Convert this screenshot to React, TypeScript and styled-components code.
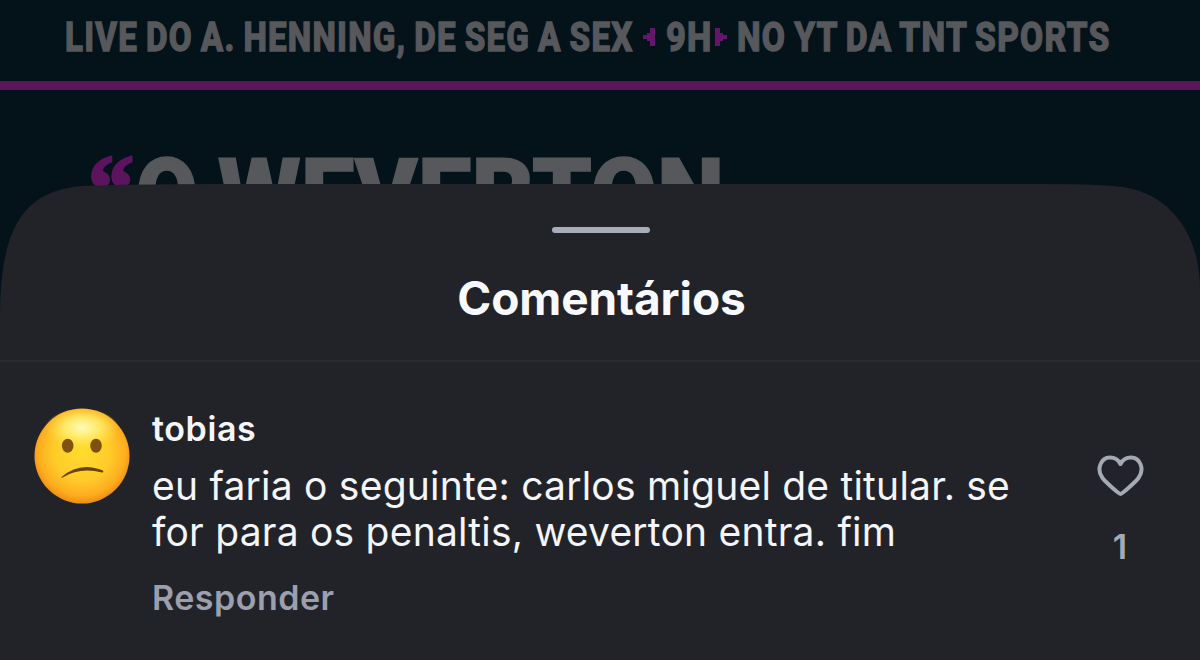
import type { ReactNode } from 'react';
import styled, { createGlobalStyle } from 'styled-components';

export default function App() {
  return (
    <Screen>
      <GlobalStyle />
      <Post>
        <Ticker>
          <Fitted width={567.5} scale={0.81}>
            LIVE DO A. HENNING, DE SEG A SEX
          </Fitted>
          <Arrow />
          <Fitted width={38.5} scale={0.84}>
            9H
          </Fitted>
          <Arrow flipped />
          <Fitted width={373} scale={0.818}>
            NO YT DA TNT SPORTS
          </Fitted>
        </Ticker>
        <Headline>
          <Fitted width={48} scale={0.96}>
            <Quote>“</Quote>
          </Fitted>
          <Fitted width={82} scale={0.93}>
            O
          </Fitted>
          <Fitted width={502} scale={0.99}>
            WEVERTON
          </Fitted>
        </Headline>
      </Post>
      <Sheet>
        <SheetHeader>
          <Handle />
          <Title>Comentários</Title>
        </SheetHeader>
        <Comment>
          <ConfusedFace />
          <Body>
            <Author>tobias</Author>
            <Message>
              eu faria o seguinte: carlos miguel de titular. se
              <br />
              for para os penaltis, weverton entra. fim
            </Message>
            <Reply>Responder</Reply>
          </Body>
          <Likes>
            <Heart />
            <Count>1</Count>
          </Likes>
        </Comment>
      </Sheet>
    </Screen>
  );
}

function Fitted({ width, scale, children }: { width: number; scale: number; children: ReactNode }) {
  return (
    <Slot $width={width}>
      <Condensed $scale={scale}>{children}</Condensed>
    </Slot>
  );
}

function Arrow({ flipped = false }: { flipped?: boolean }) {
  return (
    <ArrowIcon $flipped={flipped} width="12" height="20" viewBox="0 0 12 20">
      <path d="M12 1v18H7v-5H4v-2H0V8h4V6h3V1z" fill="#65156c" />
    </ArrowIcon>
  );
}

function ConfusedFace() {
  return (
    <Face viewBox="0 0 96 96">
      <defs>
        <radialGradient id="skin" cx="50%" cy="46%" r="54%">
          <stop offset="0" stopColor="#ffdc2e" />
          <stop offset="0.55" stopColor="#ffcb2a" />
          <stop offset="0.85" stopColor="#fdad1e" />
          <stop offset="1" stopColor="#ee8c14" />
        </radialGradient>
        <radialGradient id="shine" cx="50%" cy="42%" r="50%">
          <stop offset="0" stopColor="#fffac0" />
          <stop offset="0.45" stopColor="#fff27a" stopOpacity="0.8" />
          <stop offset="1" stopColor="#ffe64a" stopOpacity="0" />
        </radialGradient>
      </defs>
      <circle cx="48" cy="48" r="47.5" fill="url(#skin)" />
      <ellipse cx="48" cy="23" rx="38" ry="22" fill="url(#shine)" />
      <ellipse cx="33.7" cy="37.7" rx="5.8" ry="7" fill="#80500f" />
      <ellipse cx="62" cy="37.7" rx="5.8" ry="7" fill="#80500f" />
      <path d="M27.5 69Q46 53 69 62.500Q70 64.500 68 64.500Q46 59 28.500 69.500Q27 70 27.500 69Z" fill="#6a420c" />
    </Face>
  );
}

function Heart() {
  return (
    <svg width="48" height="44" viewBox="0 0 48 44">
      <path
        d="M24.500 40C23 40 9.500 28 6.500 24C0 15 5 3.500 14 3.500C18.500 3.500 22.500 6 24.500 10C26.500 6 30.500 3.500 35 3.500C44 3.500 49 15 42.500 24C39.500 28 26 40 24.500 40Z"
        fill="none"
        stroke="#a5a9b5"
        strokeWidth="4"
        strokeLinejoin="round"
      />
    </svg>
  );
}

const GlobalStyle = createGlobalStyle`
  body {
    margin: 0;
    background: #04121a;
  }
`;

const Screen = styled.div`
  width: 1200px;
  height: 660px;
  overflow: hidden;
  background: #04121a;
  font-family: Inter, 'Liberation Sans', sans-serif;
`;

const Post = styled.div`
  height: 184px;
  color: #56585c;
  font-family: Roboto, 'Liberation Sans', sans-serif;
`;

const Ticker = styled.div`
  display: flex;
  align-items: center;
  gap: 10.5px;
  box-sizing: border-box;
  height: 90px;
  padding: 0 0 7px 65px;
  border-bottom: 9px solid #5a155d;
  font-size: 41px;
  font-weight: 800;
  line-height: 48px;
  letter-spacing: 1.5px;
  word-spacing: -2px;
  -webkit-text-stroke: 1.3px #56585c;
`;

const Headline = styled.div`
  display: flex;
  height: 94px;
  padding: 48px 0 0 88px;
  font-size: 96px;
  font-weight: 900;
  line-height: 112px;
  letter-spacing: 0.5px;
  -webkit-text-stroke: 1.5px #56585c;
`;

const Slot = styled.span<{ $width: number }>`
  flex: none;
  width: ${(props) => props.$width}px;
`;

const Condensed = styled.span<{ $scale: number }>`
  display: inline-block;
  white-space: nowrap;
  transform: scaleX(${(props) => props.$scale});
  transform-origin: left;
`;

const Quote = styled.span`
  color: #5c145f;
  font-family: 'Liberation Serif', serif;
  letter-spacing: 0;
  line-height: 1;
  vertical-align: 6px;
  -webkit-text-stroke: 3px #5c145f;
`;

const ArrowIcon = styled.svg<{ $flipped: boolean }>`
  flex: none;
  transform: ${(props) => (props.$flipped ? 'scaleX(-1)' : 'none')};
`;

const Sheet = styled.div`
  position: relative;
  height: 476px;
  background: #222329;
  clip-path: path('M0 130C1 38 26 2 95 1.500Q150 0 220 0H1040Q1110 0 1128 4C1170 12 1200 50 1200 105V476H0Z');
`;

const SheetHeader = styled.div`
  display: flex;
  flex-direction: column;
  align-items: center;
  box-sizing: border-box;
  height: 178px;
  padding-top: 43px;
  border-bottom: 2px solid #2a2b30;
`;

const Handle = styled.div`
  width: 98px;
  height: 6px;
  margin-left: 2px;
  border-radius: 3px;
  background: #a8adba;
`;

const Title = styled.h1`
  margin: 37px 0 0 3px;
  color: #f8f9fc;
  font-size: 46px;
  font-weight: 700;
  line-height: 56px;
  letter-spacing: -0.1px;
`;

const Comment = styled.div`
  display: flex;
  padding: 46px 0 0 34px;
`;

const Face = styled.svg`
  flex: none;
  width: 96px;
  height: 96px;
`;

const Body = styled.div`
  flex: none;
  width: 930px;
  margin-left: 22px;
`;

const Author = styled.div`
  margin-top: -1px;
  color: #f4f5f9;
  font-size: 34px;
  font-weight: 600;
  line-height: 44px;
  letter-spacing: 0.6px;
`;

const Message = styled.p`
  margin: 12px 0 0;
  color: #f4f5f9;
  font-size: 39px;
  line-height: 46px;
  letter-spacing: 0.22px;
  white-space: nowrap;
`;

const Reply = styled.div`
  margin-top: 21px;
  color: #9b9fae;
  font-size: 34px;
  font-weight: 600;
  line-height: 44px;
  letter-spacing: 0.5px;
`;

const Likes = styled.div`
  display: flex;
  flex-direction: column;
  align-items: center;
  width: 48px;
  margin: 46px 0 0 14px;
`;

const Count = styled.span`
  margin-top: 27px;
  color: #a5a9b5;
  font-size: 34px;
  font-weight: 600;
  line-height: 44px;
`;
